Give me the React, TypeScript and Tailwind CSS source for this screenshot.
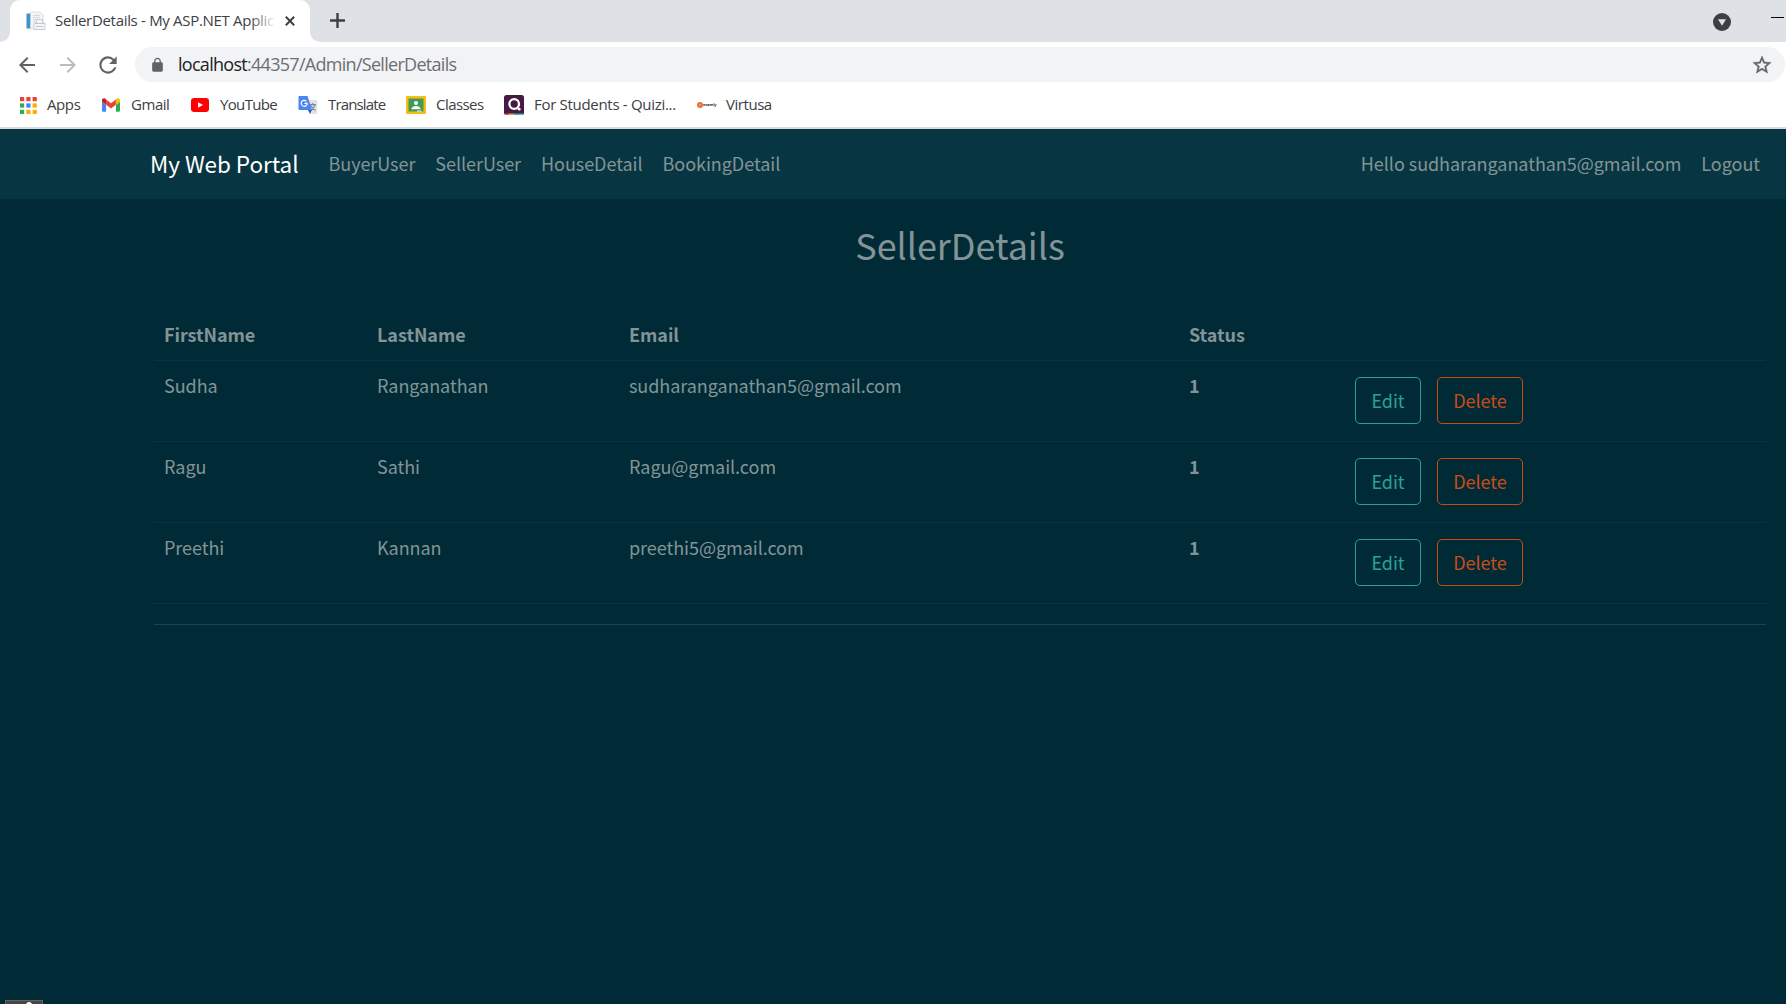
import type { ReactNode } from "react";

const uiFont = "font-['Open_Sans','Noto_Sans',sans-serif]";
const pageFont = "font-['Noto_Sans_CJK_SC','Noto_Sans',sans-serif]";

function PageIcon() {
  return (
    <svg className="block h-5 w-5" viewBox="0 0 20 20">
      <path d="M4.500 1h9.500l3 3v14H4.500z" fill="#f3f4f6" stroke="#dcdfe3" />
      <rect x="0.500" y="2.500" width="3.500" height="15" fill="#3f93c8" />
      <rect x="4" y="2.500" width="1" height="15" fill="#b4d4e8" />
      <path d="M7 4.500h7M7 6.500h7M7 8.500h3M7 10.500h2" stroke="#d6d9dd" />
      <path d="M10.500 8.500h6v3.500h2.500v6.500H8V12h2.500z" fill="#f4f5f6" stroke="#c9cdd2" />
      <path d="M9 12.500h9M10 15.500h7" stroke="#c3c7cc" />
    </svg>
  );
}

function AppsIcon() {
  const colors = ["#ea4335", "#ea4335", "#ea4335", "#34a853", "#4285f4", "#fbad05", "#34a853", "#fbad05", "#fbad05"];
  return (
    <svg className="block h-[17px] w-[17px]" viewBox="0 0 17 17">
      {colors.map((c, i) => (
        <rect key={i} x={(i % 3) * 6.3} y={Math.floor(i / 3) * 6.4} width="4.200" height="4.200" fill={c} />
      ))}
    </svg>
  );
}

function GmailIcon() {
  return (
    <svg className="block h-[14px] w-[18px]" viewBox="52 42 88 66">
      <path fill="#4285f4" d="M58 108h14V74L52 59v43c0 3.320 2.690 6 6 6" />
      <path fill="#34a853" d="M120 108h14c3.320 0 6-2.690 6-6V59l-20 15" />
      <path fill="#fbbc04" d="M120 48v26l20-15v-8c0-7.420-8.470-11.650-14.400-7.200" />
      <path fill="#ea4335" d="M72 74V48l24 18 24-18v26L96 92" />
      <path fill="#c5221f" d="M52 51v8l20 15V48l-5.600-4.200c-5.940-4.450-14.400-.220-14.400 7.200" />
    </svg>
  );
}

function YouTubeIcon() {
  return (
    <svg className="block h-[14px] w-[18px]" viewBox="0 0 18 14">
      <rect width="18" height="14" rx="3.200" fill="#ff0000" />
      <path d="M7 4.200v5.600L12 7z" fill="#fff" />
    </svg>
  );
}

function TranslateIcon() {
  return (
    <svg className="block h-5 w-5" viewBox="0 0 20 20">
      <path d="M7 5h11.200c.6 0 1 .4 1 1v12c0 .6-.4 1-1 1H12z" fill="#dfe2e6" />
      <path d="M11.500 9.600H18M14.700 8v1.600M17 9.800c-.6 2.600-2.400 4.600-4.400 5.800M12.900 10.600c1 2 2.400 3.800 4.600 5" stroke="#7d8a96" strokeWidth="1.100" fill="none" />
      <path d="M10 15h3.800L12 19z" fill="#2a56c6" />
      <path d="M1.500 1h8L14 15H1.500c-.6 0-1-.4-1-1V2c0-.6.4-1 1-1z" fill="#4a86ee" />
      <path d="M8.400 6.300A3 3 0 1 0 9.200 8.400H6.400" stroke="#fff" strokeWidth="1.200" fill="none" />
    </svg>
  );
}

function ClassroomIcon() {
  return (
    <svg className="block h-[18px] w-5" viewBox="0 0 20 18">
      <rect width="20" height="18" rx="1.200" fill="#f8bc15" />
      <rect x="2.500" y="2.500" width="15" height="13" fill="#3f9a58" />
      <circle cx="10" cy="7" r="2" fill="#fff" />
      <path d="M5.400 13.200c0-2.400 2.400-3.200 4.600-3.200s4.600.8 4.600 3.200z" fill="#eef7f0" />
      <rect x="11" y="14.500" width="4.500" height="1.200" fill="#d9e8dc" />
    </svg>
  );
}

function QuizIcon() {
  return (
    <svg className="block h-5 w-5" viewBox="0 0 20 20">
      <rect width="20" height="20" rx="2.500" fill="#461a42" />
      <path d="M1 18.500h5V20H2.500C1.700 20 1 19.300 1 18.500z" fill="#e8457c" />
      <path d="M5 18.500h5V20H5z" fill="#f0a13c" />
      <path d="M10 18.500h4.500V20H10z" fill="#3aa7dc" />
      <path d="M14.500 18.500H19c0 .8-.7 1.500-1.500 1.500h-3z" fill="#3fc3a5" />
      <circle cx="10.200" cy="9" r="4.800" fill="none" stroke="#fff" strokeWidth="2.300" />
      <circle cx="15.200" cy="14.200" r="1.400" fill="#fff" />
    </svg>
  );
}

function ExamlyIcon() {
  return (
    <span className="ml-[1px] flex h-5 w-5 items-center">
      <svg className="block h-[6px] w-[6px] shrink-0" viewBox="0 0 6 6">
        <circle cx="3" cy="3" r="3" fill="#e8703c" />
        <path d="M2 3.500l2-1.200" stroke="#f8cdb6" strokeWidth=".8" />
      </svg>
      <span className="text-[4px] leading-[6px] font-bold tracking-[-0.2px] text-[#333]">examly</span>
    </span>
  );
}

function Bookmark({ icon, label, width, tracking }: { icon: ReactNode; label: string; width: string; tracking: string }) {
  return (
    <div className={`flex h-5 shrink-0 items-center ${width}`}>
      <span className="flex w-[30px] shrink-0 items-center">{icon}</span>
      <span className={`-mt-[3px] whitespace-nowrap ${tracking}`}>{label}</span>
    </div>
  );
}

function TabStrip() {
  return (
    <div className="flex h-[42px] bg-[#dee1e6] pl-[10px] text-[#3c4043]">
      <div className="relative flex h-full w-[300px] items-center rounded-t-[10px] bg-white pb-[1px] pl-4">
        <svg className="absolute bottom-0 -left-[10px] h-[10px] w-[10px]" viewBox="0 0 10 10">
          <path d="M10 0v10H0A10 10 0 0 0 10 0z" fill="#fff" />
        </svg>
        <svg className="absolute -right-[10px] bottom-0 h-[10px] w-[10px]" viewBox="0 0 10 10">
          <path d="M0 0v10h10A10 10 0 0 1 0 0z" fill="#fff" />
        </svg>
        <PageIcon />
        <div className="relative -mt-[2px] ml-[9px] w-[219px] overflow-hidden text-[15px] leading-5 tracking-[-0.31px] whitespace-nowrap">
          SellerDetails - My ASP.NET Applic
          <div className="absolute inset-y-0 right-0 w-6 bg-gradient-to-r from-white/0 to-white/90" />
        </div>
        <svg className="ml-[11px] block h-[10px] w-[10px]" viewBox="0 0 10 10">
          <path d="M.8.8l8.400 8.400M9.200.8L.8 9.200" stroke="#3c4043" strokeWidth="2" />
        </svg>
      </div>
      <svg className="mt-[13px] ml-5 block h-[15px] w-[15px]" viewBox="0 0 15 15">
        <path d="M7.500 0v15M0 7.500h15" stroke="#3c4043" strokeWidth="2.400" />
      </svg>
      <svg className="mt-[13px] ml-auto block h-[18px] w-[18px]" viewBox="0 0 18 18">
        <circle cx="9" cy="9" r="9" fill="#3c4043" />
        <path d="M5 6.200h8L9 12.800z" fill="#dee1e6" />
      </svg>
      <div className="mt-[17px] mr-[2px] ml-10 h-[1px] w-[13px] bg-black" />
    </div>
  );
}

function AddressBar() {
  return (
    <div className="flex h-[45px] items-center pr-[1px] pl-[15px]">
      <svg className="block h-6 w-6" viewBox="0 0 24 24">
        <path d="M20 11H7.830l5.590-5.590L12 4l-8 8 8 8 1.410-1.410L7.830 13H20v-2z" fill="#5f6368" />
      </svg>
      <svg className="ml-[17px] block h-6 w-6" viewBox="0 0 24 24">
        <path d="M12 4l-1.410 1.410L16.170 11H4v2h12.170l-5.580 5.590L12 20l8-8z" fill="#babcbe" />
      </svg>
      <svg className="ml-[15px] block h-[26px] w-[26px]" viewBox="0 0 24 24">
        <path d="M17.650 6.350A7.958 7.958 0 0 0 12 4a8 8 0 1 0 7.730 10h-2.080A6 6 0 1 1 12 6c1.660 0 3.140.69 4.220 1.780L13 11h7V4l-2.350 2.350z" fill="#5f6368" />
      </svg>
      <div className="ml-[14px] flex h-[35px] flex-1 items-center rounded-full bg-[#f1f3f4] pr-3 pl-[14px]">
        <svg className="block h-4 w-[17px]" viewBox="0 0 24 24">
          <path d="M18 8h-1V6c0-2.760-2.240-5-5-5S7 3.240 7 6v2H6c-1.100 0-2 .9-2 2v10c0 1.100.9 2 2 2h12c1.100 0 2-.9 2-2V10c0-1.100-.9-2-2-2zM8.900 8V6a3.100 3.100 0 0 1 6.200 0v2z" fill="#5f6368" />
        </svg>
        <div className="-mt-[2px] ml-3 flex-1 text-[18px] leading-6 tracking-[-0.71px] whitespace-nowrap text-[#6b6f74]">
          <span className="text-[#202124]">localhost</span>:44357/Admin/SellerDetails
        </div>
        <svg className="block h-[22px] w-[22px]" viewBox="0 0 24 24">
          <path
            d="M22 9.240l-7.190-.62L12 2 9.190 8.630 2 9.240l5.460 4.730L5.820 21 12 17.270 18.180 21l-1.630-7.030L22 9.240zM12 15.400l-3.760 2.270 1-4.280-3.320-2.880 4.380-.38L12 6.100l1.710 4.040 4.380.38-3.320 2.880 1 4.280L12 15.400z"
            fill="#5f6368"
            stroke="#5f6368"
            strokeWidth=".4"
          />
        </svg>
      </div>
    </div>
  );
}

function BookmarksBar() {
  return (
    <div className="flex h-[40px] items-start pt-[8px] pl-5 text-[15px] leading-5 text-[#3c4043]">
      <Bookmark icon={<AppsIcon />} label="Apps" width="w-[82px] [&>span:first-child]:w-[27px]" tracking="tracking-[-0.4px]" />
      <Bookmark icon={<GmailIcon />} label="Gmail" width="w-[89px] [&>span:first-child]:w-[29px]" tracking="tracking-[-0.45px]" />
      <Bookmark icon={<YouTubeIcon />} label="YouTube" width="w-[107px] [&>span:first-child]:w-[29px]" tracking="tracking-[-0.65px]" />
      <Bookmark icon={<TranslateIcon />} label="Translate" width="w-[108px]" tracking="tracking-[-0.85px]" />
      <Bookmark icon={<ClassroomIcon />} label="Classes" width="w-[98px]" tracking="tracking-[-0.55px]" />
      <Bookmark icon={<QuizIcon />} label="For Students - Quizi..." width="w-[192px]" tracking="tracking-[-0.3px]" />
      <Bookmark icon={<ExamlyIcon />} label="Virtusa" width="w-[90px]" tracking="tracking-[-0.45px]" />
    </div>
  );
}

function NavBar() {
  return (
    <nav className="flex h-[70px] items-center bg-[#073642] pr-[26px] pb-[3px] pl-[150px] text-[18px] leading-[30px] tracking-[-0.05px] text-[#839496]">
      <span className="w-[178.5px] text-[22.5px] text-white">My Web Portal</span>
      <div className="flex gap-5">
        <span>BuyerUser</span>
        <span>SellerUser</span>
        <span>HouseDetail</span>
        <span>BookingDetail</span>
      </div>
      <div className="ml-auto flex gap-5">
        <span>Hello sudharanganathan5@gmail.com</span>
        <span>Logout</span>
      </div>
    </nav>
  );
}

const sellers = [
  { first: "Sudha", last: "Ranganathan", email: "sudharanganathan5@gmail.com", status: 1 },
  { first: "Ragu", last: "Sathi", email: "Ragu@gmail.com", status: 1 },
  { first: "Preethi", last: "Kannan", email: "preethi5@gmail.com", status: 1 },
];

function SellerTable() {
  return (
    <table className="w-full table-fixed border-separate border-spacing-0 border-b border-[#073642] text-left text-[18px] leading-[30px] tracking-[-0.05px]">
      <colgroup>
        <col className="w-[213px]" />
        <col className="w-[252px]" />
        <col className="w-[560px]" />
        <col className="w-[156px]" />
        <col />
      </colgroup>
      <thead>
        <tr className="h-[50px] *:px-[10px] *:pb-[2px] *:font-bold">
          <th>FirstName</th>
          <th>LastName</th>
          <th>Email</th>
          <th>Status</th>
          <th />
        </tr>
      </thead>
      <tbody>
        {sellers.map((s) => (
          <tr key={s.first} className="h-[81px] *:border-t *:border-[#073642] *:px-[10px] *:pt-[9px] *:align-top">
            <td>{s.first}</td>
            <td>{s.last}</td>
            <td>{s.email}</td>
            <td className="font-bold">{s.status}</td>
            <td>
              <div className="mt-[7px] ml-[10px] flex gap-4">
                <button className="h-[47px] w-[66px] rounded-[5px] border border-[#2aa198] pb-[2px] text-[#2aa198]">Edit</button>
                <button className="h-[47px] w-[86px] rounded-[5px] border border-[#cb4b16] pb-[2px] text-[#cb4b16]">Delete</button>
              </div>
            </td>
          </tr>
        ))}
      </tbody>
    </table>
  );
}

export default function App() {
  return (
    <div className="relative flex h-[1004px] w-[1786px] flex-col overflow-hidden bg-[#002b36]">
      <header className={`border-b-2 border-[#dadce0] bg-white ${uiFont}`}>
        <TabStrip />
        <AddressBar />
        <BookmarksBar />
      </header>
      <div className={`text-[#839496] ${pageFont}`}>
        <NavBar />
        <main className="mr-5 ml-[154px]">
          <h2 className="pt-[21px] text-center text-[36px] leading-[48px] tracking-[-0.05px]">SellerDetails</h2>
          <div className="mt-[42px]">
            <SellerTable />
          </div>
          <hr className="mt-5 border-[#1d434b]" />
        </main>
      </div>
      <div className="absolute bottom-0 left-[5px] flex h-1 w-[38px] border border-b-0 border-[#66625f] bg-[#494449] pt-[1px] pl-[20px]">
        <div className="h-[3px] w-[6px] rounded-t-full bg-white" />
      </div>
    </div>
  );
}
